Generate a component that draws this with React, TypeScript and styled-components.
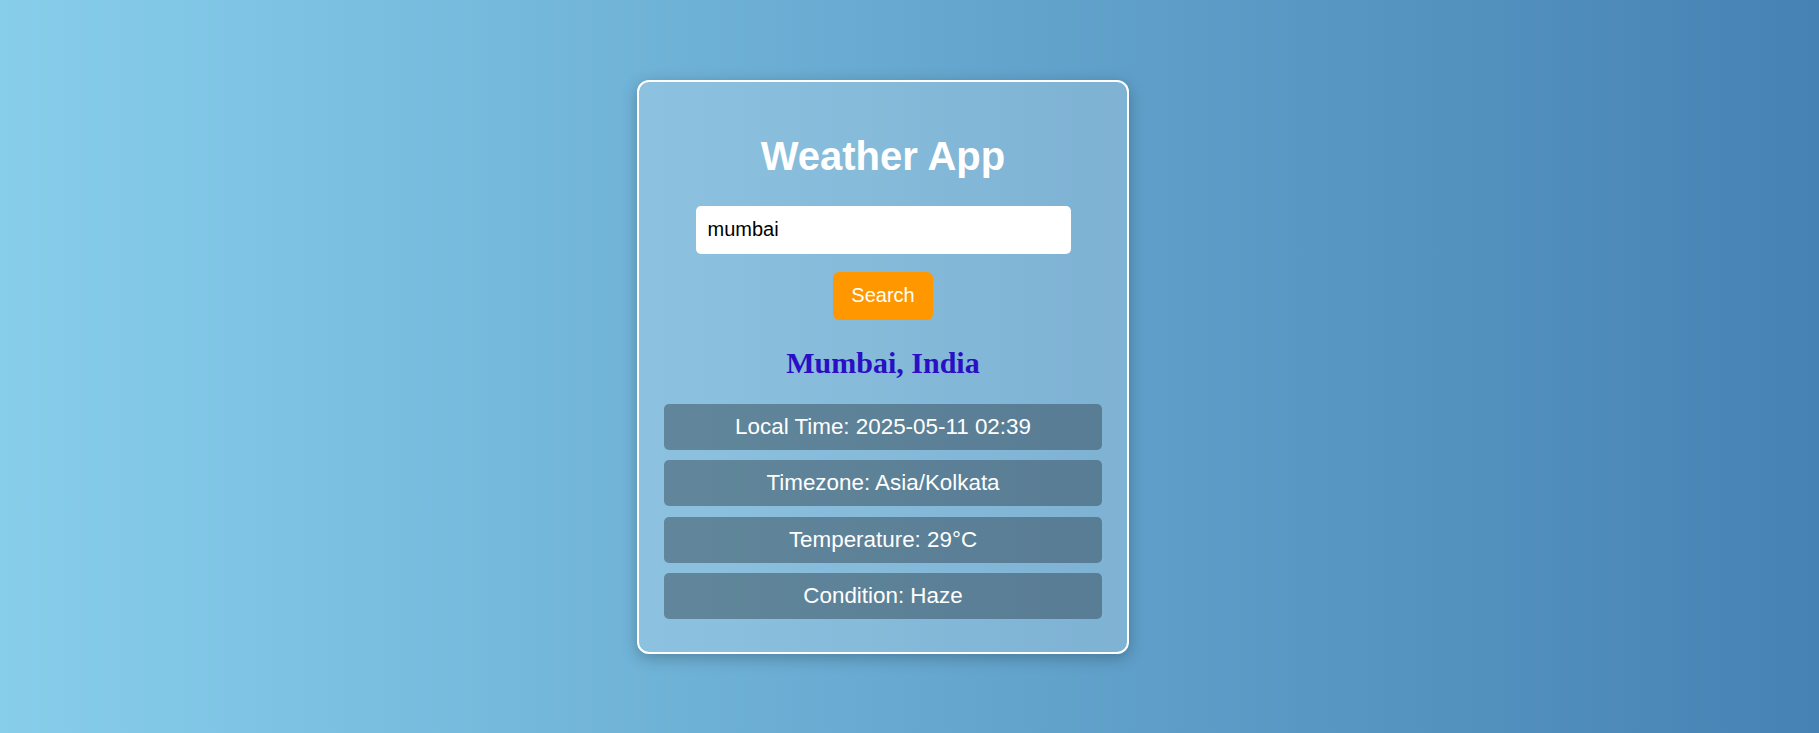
import React from "react";
import styled, { createGlobalStyle } from "styled-components";

const GlobalStyle = createGlobalStyle`
  html, body {
    margin: 0;
    padding: 0;
  }
  body {
    font-family: "Liberation Sans", Arial, sans-serif;
    background: linear-gradient(to right, #87ceeb, #4682b4);
    min-height: 100vh;
  }
`;

const Page = styled.main`
  box-sizing: border-box;
  height: 733px;
  display: flex;
  align-items: center;
  justify-content: center;
  padding-right: 53px;
`;

const Card = styled.section`
  box-sizing: border-box;
  width: 492px;
  height: 574px;
  padding: 51px 25px 31px;
  border: 2px solid #ffffff;
  border-radius: 12px;
  background: rgba(255, 255, 255, 0.2);
  box-shadow: 0 4px 15px rgba(0, 0, 0, 0.25);
  display: flex;
  flex-direction: column;
  align-items: center;
`;

const Title = styled.h1`
  margin: 0;
  font-family: "Liberation Sans", Arial, sans-serif;
  font-size: 40px;
  line-height: 46px;
  font-weight: 700;
  color: #ffffff;
`;

const SearchInput = styled.input`
  box-sizing: border-box;
  margin-top: 27px;
  width: 375px;
  height: 48px;
  padding: 0 12px;
  border: none;
  border-radius: 5px;
  background: #ffffff;
  font-family: "Liberation Sans", Arial, sans-serif;
  font-size: 20px;
  color: #000000;
  outline: none;
`;

const SearchButton = styled.button`
  box-sizing: border-box;
  margin-top: 18px;
  width: 100px;
  height: 48px;
  padding: 0;
  border: none;
  border-radius: 6px;
  background: #ff9800;
  color: #ffffff;
  font-family: "Liberation Sans", Arial, sans-serif;
  font-size: 20px;
  cursor: pointer;
`;

const City = styled.h2`
  margin: 26px 0 0;
  font-family: "Liberation Serif", "Times New Roman", serif;
  font-size: 30px;
  line-height: 34px;
  font-weight: 700;
  color: #2a0fc4;
`;

const InfoList = styled.div`
  margin-top: 24px;
  width: 100%;
  display: flex;
  flex-direction: column;
  gap: 10.5px;
`;

const InfoRow = styled.div`
  height: 46px;
  border-radius: 5px;
  background: rgba(0, 0, 0, 0.3);
  color: #ffffff;
  font-family: "Liberation Sans", Arial, sans-serif;
  font-size: 22.4px;
  display: flex;
  align-items: center;
  justify-content: center;
`;

const rows = [
  "Local Time: 2025-05-11 02:39",
  "Timezone: Asia/Kolkata",
  "Temperature: 29°C",
  "Condition: Haze",
];

export default function App() {
  return (
    <>
      <GlobalStyle />
      <Page>
        <Card>
          <Title>Weather App</Title>
          <SearchInput defaultValue="mumbai" />
          <SearchButton>Search</SearchButton>
          <City>Mumbai, India</City>
          <InfoList>
            {rows.map((r) => (
              <InfoRow key={r}>{r}</InfoRow>
            ))}
          </InfoList>
        </Card>
      </Page>
    </>
  );
}
